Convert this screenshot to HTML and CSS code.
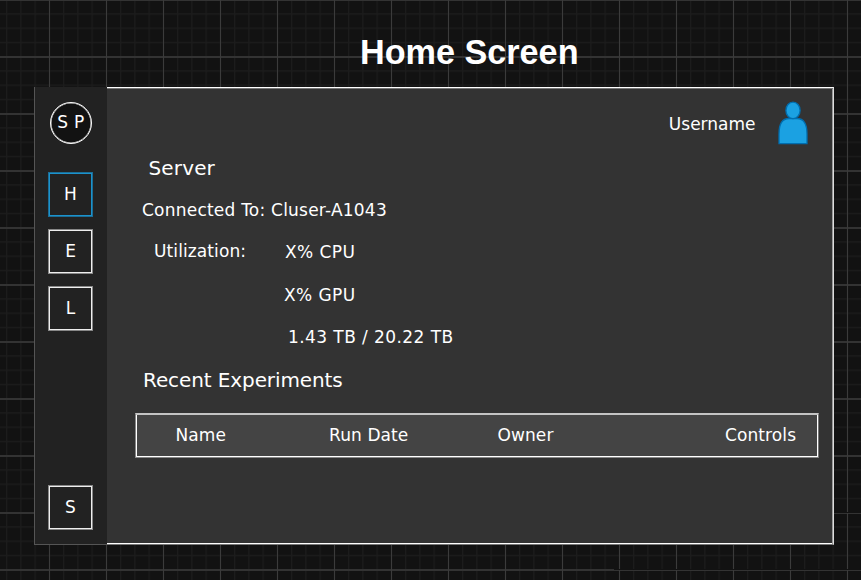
FILE: index.html
```
<!DOCTYPE html>
<html lang="en">
<head>
<meta charset="utf-8">
<title>Home Screen</title>
<link rel="stylesheet" href="styles.css">
</head>
<body>
<svg class="canvas-grid" width="861" height="580" aria-hidden="true">
  <defs>
    <pattern id="minor" x="6" y="-1" width="14.25" height="14.25" patternUnits="userSpaceOnUse">
      <path d="M.5 0V14.25M0 .75H14.25" stroke="#1c1c1c" stroke-width="1.5"/>
    </pattern>
    <pattern id="major" x="49" y="-1" width="57" height="57" patternUnits="userSpaceOnUse">
      <path d="M0 1H57" stroke="#333" stroke-width="2"/>
      <path d="M.5 0V57" stroke="#3b3b3b"/>
    </pattern>
  </defs>
  <rect width="861" height="580" fill="url(#minor)"/>
  <rect width="861" height="580" fill="url(#major)"/>
  <path d="M834 512.5H861M614 569.5H861" stroke="#121212"/>
</svg>
<h1 class="title">Home Screen</h1>
<div class="app">
  <nav class="sidebar">
    <div class="logo">S P</div>
    <a class="nav active">H</a>
    <a class="nav">E</a>
    <a class="nav">L</a>
    <a class="nav settings">S</a>
  </nav>
  <main class="content">
    <header class="user">
      <span class="username">Username</span>
      <svg class="avatar" width="30" height="44" viewBox="0 0 30 44" fill="#1ba1e2" stroke="#006eaf" stroke-width="1.3">
        <path d="M1 42.6V33Q1 17.5 11 17.5H19Q29 17.5 29 33V42.6Z"/>
        <ellipse cx="15" cy="9.4" rx="7.1" ry="8.3"/>
      </svg>
    </header>
    <h2 class="heading server">Server</h2>
    <p class="connected">Connected To: Cluser-A1043</p>
    <div class="usage">
      <span class="label">Utilization:</span>
      <div class="values">
        <p class="cpu">X% CPU</p>
        <p class="gpu">X% GPU</p>
        <p class="disk">1.43 TB / 20.22 TB</p>
      </div>
    </div>
    <h2 class="heading recent">Recent Experiments</h2>
    <div class="table-head">
      <span>Name</span><span>Run Date</span><span>Owner</span><span>Controls</span>
    </div>
  </main>
</div>
</body>
</html>
```
FILE: styles.css
```
* { box-sizing: border-box; }
body {
  margin: 0;
  width: 861px;
  height: 580px;
  overflow: hidden;
  background: #121212;
  color: #fff;
  font: 17px/20px "DejaVu Sans", Verdana, sans-serif;
}
h1, h2, p { margin: 0; font-weight: 400; }
.canvas-grid { position: absolute; inset: 0; z-index: -1; }
.title {
  height: 87px;
  padding: 32px 0 0 360px;
  font: bold 34.2px/40px "Liberation Sans", Arial, sans-serif;
  white-space: nowrap;
}
.app { display: flex; width: 800px; height: 458px; margin-left: 34px; }
.sidebar {
  display: flex;
  flex-direction: column;
  width: 73px;
  padding: 15px 0 14px 13px;
  background: #222;
  border-left: 1px solid #555;
  border-bottom: 1px solid #555;
}
.logo {
  width: 42px;
  height: 42px;
  margin: 0 0 28px 2px;
  border: 1px solid #fff;
  border-radius: 50%;
  background: #121212;
  box-shadow: inset 0 0 0 .5px #ddd;
  line-height: 39px;
  letter-spacing: .3px;
  text-align: center;
}
.nav {
  width: 45px;
  height: 45px;
  margin-bottom: 12px;
  border: 1px solid #888;
  box-shadow: inset 0 0 0 1px #eee;
  line-height: 42px;
  text-align: center;
}
.active { border-color: #1c6d96; box-shadow: inset 0 0 0 1px #1b92cc; }
.settings { height: 45px; margin: auto 0 0; line-height: 42px; }
.content {
  flex: 1;
  border: solid;
  border-width: 1px 1px 1px 0;
  border-color: #fff #ddd #777 #fff;
  background: #333;
  box-shadow: inset 0 1px #777, inset -1px 0 #999, inset 0 -1px #fff;
  white-space: nowrap;
}
.user { display: flex; justify-content: flex-end; height: 70px; padding: 13px 25px 0 0; }
.username { margin: 13px 22.5px 0 0; }
.heading { font-size: 20px; line-height: 24px; }
.server { margin: -2px 0 0 41.5px; letter-spacing: .15px; }
.connected { margin: 20px 0 0 35px; letter-spacing: .22px; }
.usage { display: flex; margin-top: 21px; padding-left: 47px; }
.label { width: 131px; letter-spacing: .1px; }
.values { display: flex; flex-direction: column; gap: 22px; padding-top: 1px; letter-spacing: .42px; }
.gpu { margin: 1px 0 0 -1px; }
.disk { margin-left: 3px; }
.recent { margin: 21px 0 0 36px; letter-spacing: -.1px; }
.table-head {
  display: grid;
  grid-template-columns: 153.5px 168.5px 227.5px 1fr;
  align-items: center;
  width: 684px;
  height: 45px;
  margin: 21px 0 0 28px;
  padding: 0 0 1px 39.5px;
  border: 1px solid;
  border-color: #c4c4c4 #777 #888 #888;
  background: #444;
  box-shadow: inset 0 1px #c4c4c4, inset 1px 0 #fff, inset -1px 0 #fff, inset 0 -1px #fff;
  letter-spacing: .1px;
}
```
